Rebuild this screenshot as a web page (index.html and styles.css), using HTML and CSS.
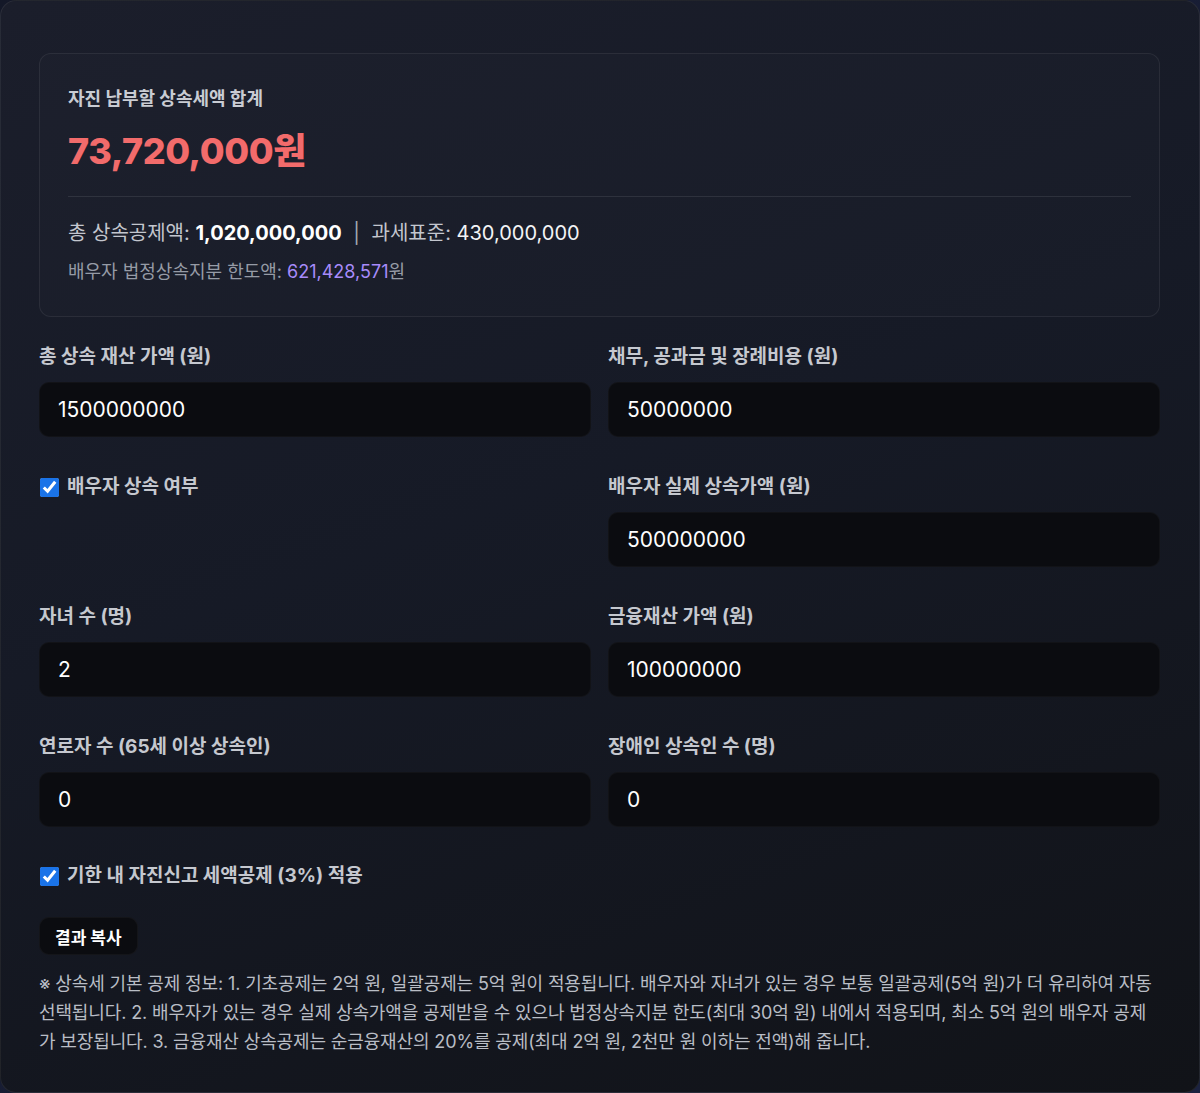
FILE: index.html
```html
<!DOCTYPE html>
<html lang="ko">
<head>
  <meta charset="UTF-8" />
  <meta name="viewport" content="width=device-width, initial-scale=1" />
  <title>상속세 계산기</title>
  <link rel="stylesheet" href="styles.css">
</head>
<body>

<div class="calc">
  <div class="summary">
    <div class="summary-title">자진 납부할 상속세액 합계</div>
    <div class="summary-total">73,720,000원</div>
    <div class="summary-line">
      총 상속공제액: <b>1,020,000,000</b> <span class="sep">|</span> 과세표준: <span class="plain">430,000,000</span>
    </div>
    <div class="summary-sub">배우자 법정상속지분 한도액: <span class="purple">621,428,571</span>원</div>
  </div>

  <div class="grid">
    <div class="field">
      <label for="total">총 상속 재산 가액 (원)</label>
      <input type="text" id="total" value="1500000000">
    </div>
    <div class="field">
      <label for="debt">채무, 공과금 및 장례비용 (원)</label>
      <input type="text" id="debt" value="50000000">
    </div>

    <div class="field">
      <label class="check"><input type="checkbox" checked> 배우자 상속 여부</label>
    </div>
    <div class="field">
      <label for="spouse">배우자 실제 상속가액 (원)</label>
      <input type="text" id="spouse" value="500000000">
    </div>

    <div class="field">
      <label for="kids">자녀 수 (명)</label>
      <input type="text" id="kids" value="2">
    </div>
    <div class="field">
      <label for="fin">금융재산 가액 (원)</label>
      <input type="text" id="fin" value="100000000">
    </div>

    <div class="field">
      <label for="elder">연로자 수 (65세 이상 상속인)</label>
      <input type="text" id="elder" value="0">
    </div>
    <div class="field">
      <label for="disabled">장애인 상속인 수 (명)</label>
      <input type="text" id="disabled" value="0">
    </div>
  </div>

  <label class="check self"><input type="checkbox" checked> 기한 내 자진신고 세액공제 (3%) 적용</label>

  <button type="button" class="copy">결과 복사</button>

  <p class="note">※ 상속세 기본 공제 정보: 1. 기초공제는 2억 원, 일괄공제는 5억 원이 적용됩니다. 배우자와 자녀가 있는 경우 보통 일괄공제(5억 원)가 더 유리하여 자동 선택됩니다. 2. 배우자가 있는 경우 실제 상속가액을 공제받을 수 있으나 법정상속지분 한도(최대 30억 원) 내에서 적용되며, 최소 5억 원의 배우자 공제가 보장됩니다. 3. 금융재산 상속공제는 순금융재산의 20%를 공제(최대 2억 원, 2천만 원 이하는 전액)해 줍니다.</p>
</div>

</body>
</html>
```

FILE: styles.css
```css
html, body {
  height: 100%;
}
body {
  margin: 0;
  background: linear-gradient(135deg, #141828 0%, #1b2240 100%);
  font-family: Inter, "Noto Sans CJK KR", sans-serif;
  color: #e5e7eb;
}
.calc {
  box-sizing: border-box;
  min-height: 1093px;
  padding: 52px 39px 30px 38px;
  background: linear-gradient(160deg, #1b1e2b 0%, #161a26 45%, #111318 100%);
  border: 1px solid rgba(255,255,255,0.07);
  border-radius: 16px;
}
.summary {
  border: 1px solid rgba(255,255,255,0.07);
  border-radius: 12px;
  padding: 32px 28px 31px 28px;
  background: rgba(255,255,255,0.01);
}
.summary-title {
  font-size: 18px;
  font-weight: 700;
  color: #c9ccd3;
  line-height: 26px;
}
.summary-total {
  font-size: 36px;
  font-weight: 800;
  color: #f26b6b;
  line-height: 48px;
  margin-top: 15px;
  letter-spacing: -0.4px;
}
.summary-line {
  border-top: 1px solid rgba(255,255,255,0.09);
  margin-top: 21px;
  padding-top: 21px;
  font-size: 20px;
  line-height: 30px;
  color: #c3c6ce;
}
.summary-line b {
  color: #ffffff;
  font-weight: 700;
}
.summary-line .sep {
  color: #a5a9b2;
  margin: 0 6px;
}
.summary-line .plain {
  color: #f3f4f6;
}
.summary-sub {
  font-size: 18px;
  line-height: 26px;
  margin-top: 11px;
  color: #969ba6;
}
.purple {
  color: #a78bfa;
}
.grid {
  display: grid;
  grid-template-columns: 1fr 1fr;
  column-gap: 17px;
  row-gap: 38px;
  margin-top: 28px;
}
.field label {
  display: block;
  font-size: 19px;
  font-weight: 700;
  color: #c5c8cf;
  line-height: 24px;
  margin-bottom: 13px;
}
.field input[type="text"] {
  box-sizing: border-box;
  width: 100%;
  height: 55px;
  background: #0b0c10;
  border: 1px solid rgba(255,255,255,0.03);
  border-radius: 10px;
  color: #ffffff;
  font-family: Inter, "Noto Sans CJK KR", sans-serif;
  font-size: 21px;
  padding: 0 18px;
  outline: none;
}
.field label.check,
.check {
  display: flex;
  align-items: center;
  gap: 8px;
  font-size: 19px;
  font-weight: 700;
  color: #c5c8cf;
  line-height: 24px;
}
.check input {
  width: 19px;
  height: 19px;
  margin: 0 0 0 1px;
  accent-color: #1a73e8;
}
.self {
  margin-top: 37px;
}
.copy {
  display: block;
  margin-top: 29px;
  height: 38px;
  padding: 0 15px;
  background: #0b0c10;
  border: 1px solid rgba(255,255,255,0.04);
  border-radius: 10px;
  color: #ffffff;
  font-family: Inter, "Noto Sans CJK KR", sans-serif;
  font-size: 17px;
  font-weight: 700;
  cursor: pointer;
}
.note {
  margin: 14px 0 0;
  font-size: 18px;
  line-height: 29px;
  letter-spacing: -0.13px;
  color: #b9bdc5;
}
```
